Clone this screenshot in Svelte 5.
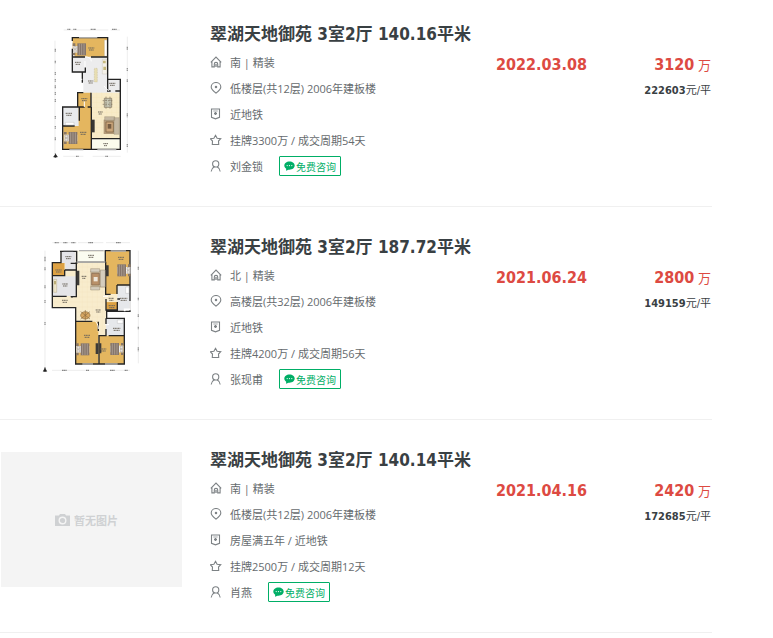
<script>
  const deals = [
    {
      title: '翠湖天地御苑 3室2厅 140.16平米',
      face: '南 | 精装',
      floor: '低楼层(共12层) 2006年建板楼',
      tags: '近地铁',
      cycle: '挂牌3300万 / 成交周期54天',
      agent: '刘金锁',
      date: '2022.03.08',
      total: '3120',
      unit: '222603',
      plan: 'narrow'
    },
    {
      title: '翠湖天地御苑 3室2厅 187.72平米',
      face: '北 | 精装',
      floor: '高楼层(共32层) 2006年建板楼',
      tags: '近地铁',
      cycle: '挂牌4200万 / 成交周期56天',
      agent: '张现甫',
      date: '2021.06.24',
      total: '2800',
      unit: '149159',
      plan: 'wide'
    },
    {
      title: '翠湖天地御苑 3室2厅 140.14平米',
      face: '南 | 精装',
      floor: '低楼层(共12层) 2006年建板楼',
      tags: '房屋满五年 / 近地铁',
      cycle: '挂牌2500万 / 成交周期12天',
      agent: '肖燕',
      date: '2021.04.16',
      total: '2420',
      unit: '172685',
      plan: null
    }
  ];
</script>

{#snippet icon(name)}
  <svg class="icon" viewBox="0 0 12 12" aria-hidden="true">
    {#if name === 'home'}
      <path d="M.8 6.300 6 1l5.200 5.300M1.900 5.400V10.900H4.300V8.100a1.700 1.700 0 0 1 3.400 0v2.800h2.400V5.400" />
      <path d="M6 8v3" stroke-width="1.300" />
    {:else if name === 'pin'}
      <path d="M6 11.200C3.600 9.200 1.200 7.200 1.200 4.900a4.800 4.400 0 0 1 9.600 0c0 2.300-2.400 4.300-4.800 6.300Z" />
      <circle cx="6" cy="5" r=".7" fill="#7d8285" />
    {:else if name === 'badge'}
      <path d="M1.500 1h8v8.300L5.500 10.800 1.500 9.300Z" />
      <path d="M3.300 3h4.400" stroke-width=".7" />
      <path d="M4 5.500h3M5.500 4v3" stroke-width="1.300" />
    {:else if name === 'star'}
      <path d="M5.500 1.300 7.100 4.300l3.600.4-2.200 2.300.2 3.500H2.300l.2-3.500L.3 4.700l3.600-.4Z" />
    {:else}
      <circle cx="5.700" cy="3.900" r="3.100" />
      <path d="M1.200 11.500c.2-2.400 1.400-3.800 3.100-4.700M10.200 11.500c-.2-2.400-1.400-3.800-3.100-4.700" />
    {/if}
  </svg>
{/snippet}

{#snippet label(x, y, w = 18)}
  <path d="M{x} {y}h{w}M{x + 2} {y + 6}h{w - 4}" stroke="#6b655b" stroke-width="3" stroke-dasharray="4 1" />
{/snippet}

{#snippet bed(x, y)}
  <g transform="translate({x} {y})">
    <path d="M0 0h8v8H0ZM0 28h8v8H0Z" fill="#8a7866" />
    <path d="M1 8h39v20H1Z" fill="#fff" />
    <path d="M14 0h26v36H14Z" fill="#85756b" />
    <path d="M20 1v34M27 1v34M34 1v34" stroke="#b8aaa0" stroke-width="2" />
    <path d="M3 9h8v8H3ZM3 19h8v8H3Z" fill="#e8e2db" stroke="#776a5e" />
  </g>
{/snippet}

{#snippet narrowPlan()}
  <svg class="plan" viewBox="0 0 181 135" role="img" aria-label="户型图">
    <g transform="translate(39 -6) scale(.3333)" fill="none">
      <path d="M71 30h134M212 30h28M45 62v340M262 50v348M70 409h60M158 409h84" stroke="#e4e4e4" stroke-width="2" />
      <path d="M82 28h10M100 28h9M152 28h16M216 28h14M108 409h8M196 409h8" stroke="#8c8c8c" stroke-width="4" stroke-dasharray="4 1" />
      <path d="M46 86v10M46 122v8M46 156v10M46 177v8M46 196v10M46 216v10M46 237v10M46 288v8M46 318v8M46 352v10M262 80v10M262 144v10M262 178v8M262 280v12M262 372v10" stroke="#999" stroke-width="4" stroke-dasharray="4 1" />
      <path d="M46 400v14M41 411h11l-5-8Z" stroke="#222" fill="#222" stroke-width="2" />

      <path d="M98 52h105v126h38v211H68V261h44v-43h18v-32h-3v-30H98v-42h5V92h-5Z" fill="#ececed" />
      <path d="M98 54h104v56H104V92h-6Z" fill="#e4b65f" />
      <path d="M113 218h40v43h-40ZM70 318h46v-57h37v126H70Z" fill="#e4b65f" />
      <path d="M155 218h86v138h-86Z" fill="#f8ebc8" />
      <path d="M170 218v138M185 218v138M200 218v138M215 218v138M230 218v138M155 232h86M155 247h86M155 262h86M155 277h86M155 292h86M155 307h86M155 322h86M155 337h86" stroke="#f3e3ba" />
      <path d="M157 358h82v30h-82Z" fill="#fbfced" />
      <path d="M70 263h44v54H70Z" fill="#e9ebed" />
      <path d="M193 60h8v49h-8Z" fill="#fff" stroke="#ad9260" />
      <path d="M187 118h14v44h-14Z" fill="#f4f1e9" stroke="#b8b2a4" />
      <path d="M189 122h8v8h-8ZM190 140h8v10h-8Z" fill="#c6b87c" />
      <path d="M163 145h9v41h-9Z" fill="#e8deb2" stroke="#b0a477" stroke-dasharray="3 2" />

      <path d="M97 63V53h106v125h38v210H68V261h45v-43h17M97 86v25h38M97 92v64h30v32M98 156h38v-14M153 53v-2M153 111h50M203 178v35h9M226 213h15M113 218v43M113 261h21M153 218v43h-10M154 261v129M70 318h34M118 261v41M154 356h87" stroke="#222" stroke-width="4" />
      <path d="M117 53h55M88 389h42M172 389h57" stroke="#aaa" stroke-width="4" />
      <path d="M135 123v20M136 110c10 2 18 4 18 14M112 178h15M192 198l14 15M133 244v17" stroke="#fff" stroke-width="3" />
      <path d="M154 299h10v38h-10Z" fill="#383633" />

      {@render bed(98, 70)}
      {@render bed(72, 336)}
      <g stroke="#7d705c" stroke-width="2">
        <path d="M193 235h22v27h-22Z" fill="#c7c7b5" />
        <path d="M188 242h32M188 253h32M198 230v36M210 230v36" stroke-dasharray="5 3" />
      </g>
      <path d="M191 299h46v43h-46Z" fill="#b39a78" />
      <path d="M198 306h22v30h-22Z" fill="#cba67b" stroke="#765c3c" stroke-width="2" />
      <path d="M222 293h16v50h-16ZM194 290h30v11h-30Z" fill="#c4b8a2" stroke="#8a7b63" />
      <path d="M203 312h11v14h-11Z" fill="#765d43" />
      <path d="M76 307h26v8H76Z" fill="#fff" stroke="#aaa" />
      {@render label(145, 84)}
      {@render label(105, 127, 17)}
      {@render label(144, 183, 16)}
      {@render label(208, 190, 18)}
      {@render label(124, 236, 18)}
      {@render label(174, 276, 14)}
      {@render label(77, 280, 20)}
      {@render label(120, 337, 20)}
      {@render label(190, 371, 14)}
    </g>
  </svg>
{/snippet}

{#snippet widePlan()}
  <svg class="plan" viewBox="0 0 181 135" role="img" aria-label="户型图">
    <g transform="translate(29 -9) scale(.3333)" fill="none">
      <path d="M67 38h73M144 38h76M228 38h72M45 62v350M325 62v338M66 421h234" stroke="#e3e3e3" stroke-width="2" />
      <path d="M74 38h12M100 38h12M124 38h12M175 38h15M258 38h14M96 421h15M168 421h10M240 421h14M284 421h10" stroke="#888" stroke-width="4" stroke-dasharray="4 1" />
      <path d="M45 80v14M45 112v10M45 166v10M45 210v10M45 276v10M325 110v10M325 203v8M325 253v8M325 290v8M325 352v12" stroke="#999" stroke-width="4" stroke-dasharray="4 1" />
      <path d="M45 411v15M40 424h10l-5-9Z" stroke="#222" fill="#222" stroke-width="2" />

      <path d="M92 62h208v182h-70v20h53v138H137V234H67V98h25Z" fill="#f8eccd" />
      <path d="M94 64h43v57h-31v-22H94ZM68 139h70v59H68Z" fill="#e5e5e8" />
      <path d="M142 64h84v30h-84Z" fill="#fbfcf0" />
      <path d="M68 99h35v38H68ZM228 63h71v102h-38v27h-33ZM138 275h67v126h-67ZM207 317h75v84h-75ZM229 217h33v21h-33Z" fill="#e4b65f" />
      <path d="M68 99h35v38H68ZM229 217h33v21h-33Z" fill="#dda143" />
      <path d="M262 167h38v75h-38ZM228 266h55v50h-55Z" fill="#e6e8eb" />
      <path d="M142 111h84M142 126h84M142 141h84M142 156h84M142 171h84M142 186h84M142 201h84M72 216h154M142 231h84M142 246h84M142 261h84M157 96v178M172 96v178M187 96v178M202 96v210M217 96v210" stroke="#f3e4bf" />
      <path d="M90 64h50v36h-18M93 64v34H67v39h37v-17M104 120h34M67 137v62h43M139 96h87V62h74v182h-70v21h53v137H137V274h50M122 200h17v-14M67 199v34h70v40M139 96v103M126 200v3M227 95v98h15M261 165h39M261 165v27M228 207v33h34v-24M262 207h8M228 265v18M228 297v20h-21v86M206 317h8M236 317h47M205 275v28" stroke="#252525" stroke-width="4" />
      <path d="M100 62h30M147 62h74M242 63h46M157 402h32M225 402h38" stroke="#b4b4b4" stroke-width="4" />
      <path d="M140 96h86M225 284h12M219 199h15M197 275c6 6 8 14 8 22" stroke="#fff" stroke-width="3" />
      <path d="M140 122h8v44h-8ZM227 106h9v33h-9ZM197 340h8v32h-8ZM208 340h6v30h-6Z" fill="#3c3a37" />
      <path d="M284 244v-6h16v-25" stroke="#fff" stroke-width="5" />

      {@render bed(138, 340)}
      <g transform="rotate(180 281 357)">{@render bed(281, 339)}</g>
      <g transform="rotate(180 302 121)">{@render bed(302, 103)}</g>
      <path d="M181 122h44v50h-44Z" fill="#cdbb9d" />
      <path d="M185 130h23v35h-23Z" fill="#b99068" stroke="#80644a" stroke-width="2" />
      <path d="M211 120h15v51h-15ZM182 116h27v10h-27ZM182 170h27v10h-27Z" fill="#d5cdbd" stroke="#73654e" />
      <path d="M191 141h12v13h-12Z" fill="#eee6d9" />
      <ellipse cx="166" cy="256" rx="14" ry="11" fill="#d8a762" stroke="#8c6c3f" stroke-width="2" />
      <path d="m152 245 28 22M180 245l-28 22M166 240v32" stroke="#8c6c3f" stroke-width="2" />
      <path d="M71 148h9v39h-9Z" fill="#eee6c9" stroke="#a3936c" />
      <path d="M72 153h6v10h-6Z" fill="#bbad77" />
      <path d="M287 171h10v19h-10ZM262 270h17v10h-17Z" fill="#fff" stroke="#aaa" />
      {@render label(106, 80, 18)}
      {@render label(174, 76, 18)}
      {@render label(76, 120, 20)}
      {@render label(155, 139, 14)}
      {@render label(264, 82, 18)}
      {@render label(97, 162, 17)}
      {@render label(96, 211, 17)}
      {@render label(197, 240, 16)}
      {@render label(236, 205, 16)}
      {@render label(270, 205, 22)}
      {@render label(236, 227, 20)}
      {@render label(249, 295, 22)}
      {@render label(162, 316, 18)}
      {@render label(211, 357, 18)}
    </g>
  </svg>
{/snippet}

<ul class="deals">
  {#each deals as deal}
    <li class="deal">
      <a class="cover" href="#detail" aria-label={deal.title}>
        {#if deal.plan === 'narrow'}
          {@render narrowPlan()}
        {:else if deal.plan === 'wide'}
          {@render widePlan()}
        {:else}
          <span class="empty">
            <svg class="camera" viewBox="0 0 15 12" aria-hidden="true">
              <path d="M0 1.500h4L5 0h5l1 1.500h4V12H0Z" fill="#cfd1d3" />
              <circle cx="7.500" cy="6.500" r="3.300" fill="#cfd1d3" stroke="#f4f4f4" stroke-width="1.400" />
            </svg>
            暂无图片
          </span>
        {/if}
      </a>
      <div class="info">
        <h3><a href="#detail">{deal.title}</a></h3>
        <p>{@render icon('home')}{deal.face}</p>
        <p>{@render icon('pin')}{deal.floor}</p>
        <p>{@render icon('badge')}{deal.tags}</p>
        <p>{@render icon('star')}{deal.cycle}</p>
        <div class="agent">
          {@render icon('person')}<a href="#agent">{deal.agent}</a>
          <button type="button">
            <svg class="chat" viewBox="0 0 11 10" aria-hidden="true">
              <path d="M5.500.5c3 0 5.200 1.800 5.200 4.100s-2.200 4.100-5.200 4.100l-1 0L2 9.700l.2-1.900C1 7 .3 5.900.3 4.600.3 2.300 2.500.5 5.500.5Z" fill="#00ae66" />
              <circle cx="3.200" cy="4.600" r=".6" fill="#fff" />
              <circle cx="5.500" cy="4.600" r=".6" fill="#fff" />
              <circle cx="7.800" cy="4.600" r=".6" fill="#fff" />
            </svg>免费咨询
          </button>
        </div>
      </div>
      <div class="result">
        <time>{deal.date}</time>
        <div class="price">
          <div class="total"><strong>{deal.total}</strong> 万</div>
          <div class="unit"><strong>{deal.unit}</strong>元/平</div>
        </div>
      </div>
    </li>
  {/each}
</ul>

<style>
  :global(body) {
    background: #fff;
  }
  .deals {
    margin: 0 61px 0 0;
    padding: 0;
    list-style: none;
    font-family: 'Open Sans', 'Noto Sans CJK SC', sans-serif;
    font-size: 11px;
    color: #666b6e;
  }
  .deal {
    display: flex;
    padding: 32px 0 27px 1px;
    border-bottom: 1px solid #f0f0f0;
  }
  .deal:first-child {
    padding-top: 26px;
  }
  a {
    color: inherit;
    text-decoration: none;
  }
  .cover {
    flex: none;
    width: 181px;
    height: 135px;
    margin-right: 28px;
  }
  .plan {
    display: block;
    width: 100%;
    height: 100%;
  }
  .empty {
    box-sizing: border-box;
    display: flex;
    align-items: center;
    justify-content: center;
    gap: 4px;
    height: 100%;
    padding-right: 10px;
    background: #f4f4f4;
    color: #cfd1d3;
    font-weight: 700;
  }
  .camera {
    width: 15px;
    height: 12px;
  }
  .info {
    flex: 1;
    min-width: 0;
  }
  h3 {
    margin: 0 0 7px;
    font: 700 17px/16px 'DejaVu Sans Condensed', 'Noto Sans CJK SC', sans-serif;
    color: #394043;
    white-space: nowrap;
  }
  p,
  .agent {
    display: flex;
    align-items: center;
    gap: 8px;
    height: 26px;
    margin: 0;
    white-space: nowrap;
  }
  .icon {
    flex: none;
    width: 12px;
    height: 12px;
    fill: none;
    stroke: #7d8285;
    stroke-width: 1.1;
  }
  button {
    display: flex;
    align-items: center;
    gap: 1px;
    height: 20px;
    margin: 0 0 0 8px;
    padding: 0 4px;
    border: 1px solid #00ae66;
    border-radius: 1px;
    background: #fff;
    color: #00ae66;
    font-family: inherit;
    font-size: 10px;
    cursor: pointer;
  }
  .chat {
    width: 11px;
    height: 10px;
  }
  .result {
    flex: none;
    display: flex;
    justify-content: space-between;
    width: 215px;
    margin-right: 1px;
    padding-top: 26px;
    line-height: 26px;
    font-family: 'DejaVu Sans Condensed', 'Noto Sans CJK SC', sans-serif;
    white-space: nowrap;
  }
  time {
    font-size: 16px;
    font-weight: 700;
    color: #dd4a42;
  }
  .price {
    text-align: right;
  }
  .total {
    height: 26px;
    font-size: 13px;
    color: #dd4a42;
  }
  .total strong {
    font-size: 16px;
  }
  .unit {
    height: 26px;
    color: #394043;
  }
</style>
